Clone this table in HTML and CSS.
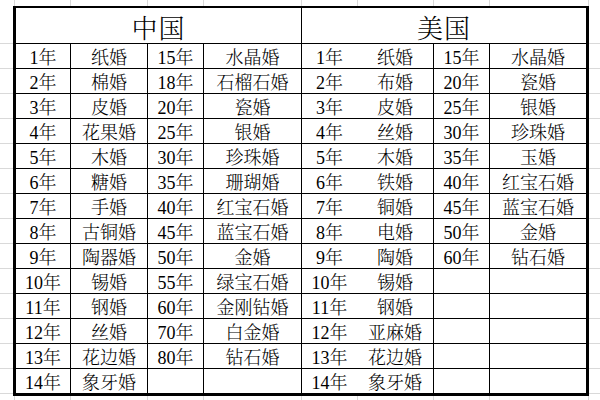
FILE: index.html
```html
<!DOCTYPE html>
<html lang="zh-CN">
<head>
<meta charset="utf-8">
<title>结婚纪念日</title>
<link rel="stylesheet" href="styles.css">
</head>
<body>
<div class="sheet">
  <div class="head">中国</div>
  <div class="head">美国</div>

  <div class="c">1年</div><div class="c">纸婚</div><div class="c">15年</div><div class="c">水晶婚</div>
  <div class="pair"><span>1年</span><span>纸婚</span></div><div class="c">15年</div><div class="c">水晶婚</div>

  <div class="c">2年</div><div class="c">棉婚</div><div class="c">18年</div><div class="c">石榴石婚</div>
  <div class="pair"><span>2年</span><span>布婚</span></div><div class="c">20年</div><div class="c">瓷婚</div>

  <div class="c">3年</div><div class="c">皮婚</div><div class="c">20年</div><div class="c">瓷婚</div>
  <div class="pair"><span>3年</span><span>皮婚</span></div><div class="c">25年</div><div class="c">银婚</div>

  <div class="c">4年</div><div class="c">花果婚</div><div class="c">25年</div><div class="c">银婚</div>
  <div class="pair"><span>4年</span><span>丝婚</span></div><div class="c">30年</div><div class="c">珍珠婚</div>

  <div class="c">5年</div><div class="c">木婚</div><div class="c">30年</div><div class="c">珍珠婚</div>
  <div class="pair"><span>5年</span><span>木婚</span></div><div class="c">35年</div><div class="c">玉婚</div>

  <div class="c">6年</div><div class="c">糖婚</div><div class="c">35年</div><div class="c">珊瑚婚</div>
  <div class="pair"><span>6年</span><span>铁婚</span></div><div class="c">40年</div><div class="c">红宝石婚</div>

  <div class="c">7年</div><div class="c">手婚</div><div class="c">40年</div><div class="c">红宝石婚</div>
  <div class="pair"><span>7年</span><span>铜婚</span></div><div class="c">45年</div><div class="c">蓝宝石婚</div>

  <div class="c">8年</div><div class="c">古铜婚</div><div class="c">45年</div><div class="c">蓝宝石婚</div>
  <div class="pair"><span>8年</span><span>电婚</span></div><div class="c">50年</div><div class="c">金婚</div>

  <div class="c">9年</div><div class="c">陶器婚</div><div class="c">50年</div><div class="c">金婚</div>
  <div class="pair"><span>9年</span><span>陶婚</span></div><div class="c">60年</div><div class="c">钻石婚</div>

  <div class="c">10年</div><div class="c">锡婚</div><div class="c">55年</div><div class="c">绿宝石婚</div>
  <div class="pair"><span>10年</span><span>锡婚</span></div><div class="c"></div><div class="c"></div>

  <div class="c">11年</div><div class="c">钢婚</div><div class="c">60年</div><div class="c">金刚钻婚</div>
  <div class="pair"><span>11年</span><span>钢婚</span></div><div class="c"></div><div class="c"></div>

  <div class="c">12年</div><div class="c">丝婚</div><div class="c">70年</div><div class="c">白金婚</div>
  <div class="pair"><span>12年</span><span>亚麻婚</span></div><div class="c"></div><div class="c"></div>

  <div class="c">13年</div><div class="c">花边婚</div><div class="c">80年</div><div class="c">钻石婚</div>
  <div class="pair"><span>13年</span><span>花边婚</span></div><div class="c"></div><div class="c"></div>

  <div class="c">14年</div><div class="c">象牙婚</div><div class="c"></div><div class="c"></div>
  <div class="pair"><span>14年</span><span>象牙婚</span></div><div class="c"></div><div class="c"></div>
</div>
</body>
</html>
```

FILE: styles.css
```css
html {
  min-height: 100%;
  background-color: #ffffff;
  background-image:
    repeating-linear-gradient(to bottom, #d9d9d9 0 1px, transparent 1px 25px),
    linear-gradient(#d9d9d9, #d9d9d9),
    linear-gradient(#d9d9d9, #d9d9d9),
    linear-gradient(#d9d9d9, #d9d9d9),
    linear-gradient(#d9d9d9, #d9d9d9),
    linear-gradient(#d9d9d9, #d9d9d9),
    linear-gradient(#d9d9d9, #d9d9d9),
    linear-gradient(#d9d9d9, #d9d9d9),
    linear-gradient(#d9d9d9, #d9d9d9),
    linear-gradient(#d9d9d9, #d9d9d9);
  background-size:
    100% 400px,
    1px 100%, 1px 100%, 1px 100%, 1px 100%, 1px 100%,
    1px 100%, 1px 100%, 1px 100%, 1px 100%;
  background-position:
    0 43px,
    14px 0, 70px 0, 147px 0, 203px 0, 301px 0,
    357px 0, 433px 0, 489px 0, 588px 0;
  background-repeat: no-repeat;
}

body {
  margin: 0;
  height: 400px;
  overflow: hidden;
  font-family: "Liberation Serif", "Noto Serif CJK SC", "Noto Sans CJK SC", serif;
  color: #000;
}

.sheet {
  margin: 6px 0 0 13px;
  width: max-content;
  display: grid;
  grid-template-columns: 54px 76px 55px 97px 131px 55px 96px;
  grid-template-rows: 35px repeat(14, 24px);
  gap: 1px;
  background: #000;
  border: solid #000;
  border-width: 2px 3px 3px 3px;
}

.head {
  grid-column: span 4;
  background: #fff;
  display: flex;
  align-items: center;
  justify-content: center;
  font-size: 26px;
  font-weight: 300;
  padding-top: 2px;
  letter-spacing: 1px;
}

.head + .head {
  grid-column: span 3;
}

.c,
.pair span {
  background: #fff;
  display: flex;
  align-items: center;
  justify-content: center;
  font-size: 18px;
  font-weight: 300;
  line-height: 1;
  padding-top: 3px;
  white-space: nowrap;
}

.pair {
  background: #fff;
  display: grid;
  grid-template-columns: 55px 76px;
}
```
